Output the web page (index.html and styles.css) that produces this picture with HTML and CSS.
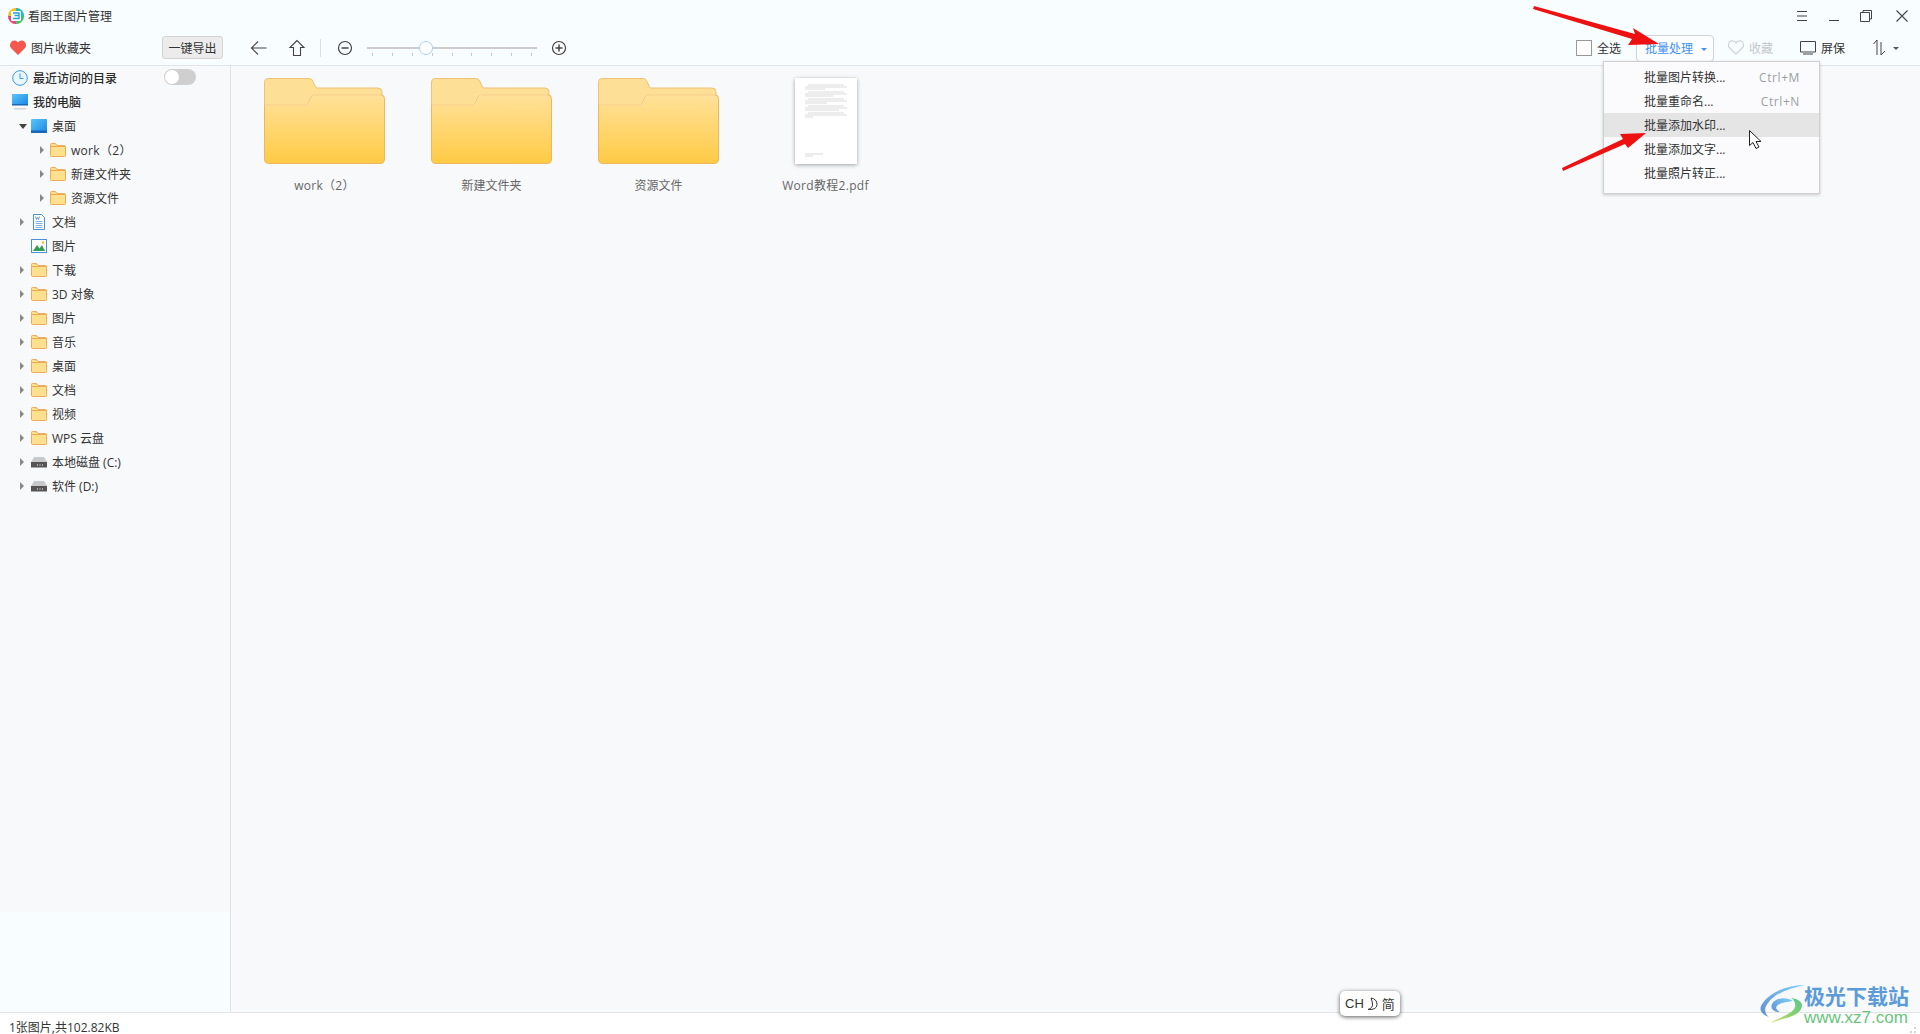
FILE: index.html
```html
<!DOCTYPE html>
<html lang="zh">
<head>
  <meta charset="UTF-8">
  <title>看图王图片管理</title>
  <link rel="stylesheet" href="styles.css">
</head>
<body>
  <svg class="defs" width="0" height="0">
    <defs>
      <linearGradient id="bigFolder" x1="0" y1="0" x2="0" y2="1">
        <stop offset="0" stop-color="#ffe199"/>
        <stop offset="1" stop-color="#ffcb45"/>
      </linearGradient>
      <linearGradient id="screenBlue" x1="0" y1="0" x2="1" y2="1">
        <stop offset="0" stop-color="#5cc5fb"/>
        <stop offset="1" stop-color="#1a86e4"/>
      </linearGradient>
      <linearGradient id="swirlBlue" x1="0" y1="1" x2="1" y2="0">
        <stop offset="0" stop-color="#5f8fd4"/>
        <stop offset="1" stop-color="#7fd0f7"/>
      </linearGradient>
      <linearGradient id="swirlGreen" x1="0" y1="1" x2="1" y2="0">
        <stop offset="0" stop-color="#efe08a"/>
        <stop offset=".45" stop-color="#8ed26a"/>
        <stop offset="1" stop-color="#58c88c"/>
      </linearGradient>
      <symbol id="folder" viewBox="0 0 16 16">
        <path d="M.5 2.500q0-1 1-1h4l1.500 2h7.500q1 0 1 1v9q0 1-1 1h-13q-1 0-1-1z" fill="#ffe08f" stroke="#eeaa55"/>
        <path d="M1 4.500h14" stroke="#eeaa55"/>
      </symbol>
      <symbol id="disk" viewBox="0 0 16 16">
        <path d="M3 3h10l3 5H0z" fill="#c9c9c9"/>
        <path d="M0 8h16v5.500H0z" fill="#555"/>
        <path d="M6 11h1M8.500 11h1M11 11h1" stroke="#fff"/>
      </symbol>
      <symbol id="bigfolder" viewBox="0 0 121 86">
        <path d="M4 .5h41q3 0 4 3l3 6.500h62q4 0 4 4v16H.5V4q0-3.500 3.500-3.500z" fill="#fddf96" stroke="#f0c277"/>
        <path d="M.5 27h41q2 0 3-2l3-6q1-2 3-2H117q3.500 0 3.500 3.500V81q0 4.500-4.500 4.500H5q-4.500 0-4.500-4.500z" fill="url(#bigFolder)" stroke="#efb660"/>
        <path d="M1 27h41q2 0 3-2l3-6q1-2 3-2h66" fill="none" stroke="#ffe9b4" stroke-width=".8"/>
      </symbol>
    </defs>
  </svg>

  <header class="top">
    <div class="titlebar">
      <svg class="app-logo" width="16" height="16" viewBox="0 0 16 16">
        <circle cx="8" cy="8" r="8" fill="#f2c21b"/>
        <path d="M8 0a8 8 0 0 1 8 8H8z" fill="#26b8d8"/>
        <path d="M16 8a8 8 0 0 1-8 8V8z" fill="#3ac66d"/>
        <path d="M8 16a8 8 0 0 1-8-8h8z" fill="#e8428c"/>
        <rect x="3" y="3" width="10" height="10" rx="1" fill="#fff"/>
        <path d="M5 5h6v2.500H6.500M11 7.500v3H5" fill="none" stroke="#1aa6d8" stroke-width="1.300"/>
      </svg>
      <span class="app-name">看图王图片管理</span>
      <div class="win-btns">
        <svg width="16" height="16" viewBox="0 0 16 16"><path d="M3 3.500h10M3 8h10M3 12.500h10" stroke="#444"/></svg>
        <svg width="16" height="16" viewBox="0 0 16 16"><path d="M3 12.500h10" stroke="#444"/></svg>
        <svg width="16" height="16" viewBox="0 0 16 16"><path d="M2.500 4.500h9v9h-9zM5 4.500v-2h8.500v8.500h-2" fill="none" stroke="#444"/></svg>
        <svg width="16" height="16" viewBox="0 0 16 16"><path d="M2.500 2.500l11 11M13.500 2.500l-11 11" stroke="#444" stroke-width="1.100"/></svg>
      </div>
    </div>
    <div class="toolbar">
      <div class="tool-left">
        <svg width="16" height="15" viewBox="0 0 16 15"><path d="M8 15L1.200 8.200Q-1 5.500.8 2.500 2.500 0 5 .5 7 .8 8 2.500 9 .8 11 .5q2.500-.5 4.200 2 1.800 3-.4 5.700z" fill="#f4574c"/></svg>
        <span class="fav-label">图片收藏夹</span>
        <button class="export-btn">一键导出</button>
      </div>
      <div class="tool-nav">
        <svg class="nav-back" width="18" height="18" viewBox="0 0 18 18"><path d="M8 2.500L1.500 9 8 15.500M1.500 9h15" fill="none" stroke="#444" stroke-width="1.100"/></svg>
        <svg class="nav-up" width="18" height="18" viewBox="0 0 18 18"><path d="M9 1.500L2 8.500h3.500v8h7v-8H16z" fill="none" stroke="#444" stroke-width="1.100"/></svg>
        <span class="nav-sep"></span>
        <svg class="zoom-out" width="16" height="16" viewBox="0 0 16 16"><circle cx="8" cy="8" r="6.500" fill="none" stroke="#444" stroke-width="1.200"/><path d="M4.500 8h7" stroke="#444" stroke-width="1.500"/></svg>
        <div class="slider">
          <div class="track"></div>
          <div class="ticks"><i></i><i></i><i></i><i></i><i></i><i></i><i></i><i></i><i></i></div>
          <div class="thumb"></div>
        </div>
        <svg class="zoom-in" width="16" height="16" viewBox="0 0 16 16"><circle cx="8" cy="8" r="6.500" fill="none" stroke="#444" stroke-width="1.200"/><path d="M4.500 8h7M8 4.500v7" stroke="#444" stroke-width="1.500"/></svg>
      </div>
      <div class="tool-right">
        <span class="checkbox"></span>
        <span class="tr-label">全选</span>
        <button class="batch-btn">批量处理<i class="caret blue"></i></button>
        <svg class="fav-heart" width="16" height="15" viewBox="0 0 16 15"><path d="M8 14L1.500 7.800Q-.5 5 1.200 2.500 3 .2 5.500 1 7.200 1.500 8 3 8.800 1.500 10.500 1 13 .2 14.800 2.500 16.500 5 14.500 7.800z" fill="none" stroke="#cfd3d6" stroke-width="1.200"/></svg>
        <span class="tr-label muted">收藏</span>
        <svg class="screen-icon" width="16" height="15" viewBox="0 0 16 15"><path d="M.5 1.500h15v10.500H.5z" fill="none" stroke="#444"/><path d="M3 14h10" stroke="#444"/></svg>
        <span class="tr-label">屏保</span>
        <svg class="sort-icon" width="13" height="15" viewBox="0 0 13 15"><path d="M4 0v15M4 0L.5 4M8 15V2M8 15l4-4" fill="none" stroke="#444"/></svg>
        <i class="caret"></i>
      </div>
    </div>
  </header>

  <div class="body-row">
    <aside class="sidebar">
      <div class="tree">
        <div class="row root">
          <svg width="16" height="16" viewBox="0 0 16 16"><circle cx="8" cy="8" r="7.300" fill="#eaf6fe" stroke="#3a9ae0"/><path d="M8 3.500V8.500h3.500" fill="none" stroke="#3a9ae0"/></svg>
          <span>最近访问的目录</span>
          <span class="toggle"><i></i></span>
        </div>
        <div class="row root">
          <svg width="16" height="16" viewBox="0 0 16 16"><rect y="0" width="16" height="11" fill="url(#screenBlue)"/><path d="M0 10h16v1.500H0z" fill="#1569b8"/><path d="M2 14h12v1.500H2z" fill="#d4d4d4"/></svg>
          <span>我的电脑</span>
        </div>
        <div class="row lv1">
          <i class="arrow open"></i>
          <svg width="16" height="14" viewBox="0 0 16 14"><rect width="16" height="14" rx="1" fill="url(#screenBlue)"/><path d="M0 11.500h16V14H0z" fill="#1569b8"/></svg>
          <span>桌面</span>
        </div>
        <div class="row lv2"><i class="arrow"></i><svg width="16" height="16"><use href="#folder"/></svg><span class="wide">work（2）</span></div>
        <div class="row lv2"><i class="arrow"></i><svg width="16" height="16"><use href="#folder"/></svg><span>新建文件夹</span></div>
        <div class="row lv2"><i class="arrow"></i><svg width="16" height="16"><use href="#folder"/></svg><span>资源文件</span></div>
        <div class="row lv1">
          <i class="arrow"></i>
          <svg width="16" height="16" viewBox="0 0 16 16"><path d="M2.500.5h8l3 3v12h-11z" fill="#fff" stroke="#4a90d8"/><path d="M4.500 7.500h7M4.500 9.500h7M4.500 11.500h7M4.500 13.500h7" stroke="#7fb2e5"/><path d="M4.500 2.500l1 3 1-2 1 2 1-3" fill="none" stroke="#3a7cc8" stroke-width=".8"/></svg>
          <span>文档</span>
        </div>
        <div class="row lv1">
          <i class="arrow none"></i>
          <svg width="16" height="16" viewBox="0 0 16 16"><rect x=".5" y="1.500" width="15" height="13" fill="#fff" stroke="#4a90d8"/><path d="M2 13l4-6 2.500 3.500L11 7l3 6z" fill="#2f9e55"/><circle cx="12" cy="4.500" r="1.300" fill="#f2c21b"/></svg>
          <span>图片</span>
        </div>
        <div class="row lv1"><i class="arrow"></i><svg width="16" height="16"><use href="#folder"/></svg><span>下载</span></div>
        <div class="row lv1"><i class="arrow"></i><svg width="16" height="16"><use href="#folder"/></svg><span>3D 对象</span></div>
        <div class="row lv1"><i class="arrow"></i><svg width="16" height="16"><use href="#folder"/></svg><span>图片</span></div>
        <div class="row lv1"><i class="arrow"></i><svg width="16" height="16"><use href="#folder"/></svg><span>音乐</span></div>
        <div class="row lv1"><i class="arrow"></i><svg width="16" height="16"><use href="#folder"/></svg><span>桌面</span></div>
        <div class="row lv1"><i class="arrow"></i><svg width="16" height="16"><use href="#folder"/></svg><span>文档</span></div>
        <div class="row lv1"><i class="arrow"></i><svg width="16" height="16"><use href="#folder"/></svg><span>视频</span></div>
        <div class="row lv1"><i class="arrow"></i><svg width="16" height="16"><use href="#folder"/></svg><span>WPS 云盘</span></div>
        <div class="row lv1"><i class="arrow"></i><svg width="16" height="16"><use href="#disk"/></svg><span>本地磁盘 (C:)</span></div>
        <div class="row lv1"><i class="arrow"></i><svg width="16" height="16"><use href="#disk"/></svg><span>软件 (D:)</span></div>
      </div>
      <div class="side-foot"></div>
    </aside>

    <main class="files">
      <div class="file">
        <svg class="file-folder" width="121" height="86"><use href="#bigfolder"/></svg>
        <span class="file-name wide">work（2）</span>
      </div>
      <div class="file">
        <svg class="file-folder" width="121" height="86"><use href="#bigfolder"/></svg>
        <span class="file-name">新建文件夹</span>
      </div>
      <div class="file">
        <svg class="file-folder" width="121" height="86"><use href="#bigfolder"/></svg>
        <span class="file-name">资源文件</span>
      </div>
      <div class="file">
        <div class="pdf-page">
          <svg width="62" height="86" viewBox="0 0 62 86">
            <g class="pdf-lines" stroke="#8d8d8d" stroke-width=".6">
              <path d="M13 7h36M10 9h42M10 11h20M13 14h36M10 16h42M10 18h28M13 21h36M10 23h42M10 25h22M13 28h36M10 30h42M10 32h34M13 35h36M10 37h42M10 39h8M10 76h18M10 78h8"/>
            </g>
          </svg>
        </div>
        <span class="file-name wide">Word教程2.pdf</span>
      </div>
    </main>
  </div>

  <footer class="status">1张图片,共102.82KB</footer>

  <!-- batch dropdown -->
  <div class="menu">
    <div class="menu-item"><span>批量图片转换...</span><span class="key">Ctrl+M</span></div>
    <div class="menu-item"><span>批量重命名...</span><span class="key">Ctrl+N</span></div>
    <div class="menu-item hover"><span>批量添加水印...</span></div>
    <div class="menu-item"><span>批量添加文字...</span></div>
    <div class="menu-item"><span>批量照片转正...</span></div>
  </div>

  <div class="ime">CH<svg width="12" height="14" viewBox="0 0 12 14"><path d="M4 1q6 1 6 6.500T1 12.500Q6 11 5.500 7 5.200 4 4 1z" fill="none" stroke="#333"/></svg>简</div>

  <div class="watermark">
    <svg class="wm-swirl" width="45" height="39" viewBox="0 0 45 39">
      <path d="M45 1C28 1 8 8 1 22-1 27 3 31 9 33 4 29 4 24 8 19 15 9 30 4 45 1z" fill="url(#swirlBlue)"/>
      <path d="M33 17C26 12 15 14 12 20 10 25 14 28 20 28 16 26 15 23 18 21 22 18 28 18 33 17z" fill="url(#swirlBlue)"/>
      <path d="M31 14C40 15 44 20 41 25 37 33 24 34 10 39 20 33 33 30 35 23 36 19 34 16 31 14z" fill="url(#swirlGreen)"/>
    </svg>
    <div class="wm-text">
      <span class="wm-cn">极光下载站</span>
      <span class="wm-url">www.xz7.com</span>
    </div>
  </div>

  <!-- red annotation arrows, the mouse pointer, the resize grip -->
  <svg class="overlay" width="1920" height="1034" viewBox="0 0 1920 1034">
    <g fill="#ee1111">
      <path d="M1534 6L1635 34 1633 28 1659 44 1628 45 1632 39 1533 9z"/>
      <path d="M1562 168L1623 139 1620 134 1646 133 1628 148 1625 144 1563 171z"/>
    </g>
    <path d="M1749.500 130.500v15l3.500-3 3 6 3-1.500-3-5.500h5z" fill="#fff" stroke="#222"/>
    <path d="M1914 1027h2v2h-2zM1910 1031h2v2h-2zM1914 1031h2v2h-2z" fill="#d4d4d4"/>
  </svg>
</body>
</html>
```

FILE: styles.css
```css
* {
  box-sizing: border-box;
}
html, body {
  margin: 0;
  height: 100%;
}
body {
  position: relative;
  display: flex;
  flex-direction: column;
  height: 1034px;
  overflow: hidden;
  font-family: "Open Sans", "Noto Sans CJK SC", sans-serif;
  font-size: 12px;
  color: #333;
  background-color: #f8f9fb;
}
.defs {
  position: absolute;
}
svg {
  display: block;
  flex: none;
}
.wide {
  letter-spacing: 0.3px;
}

/* top area */
.top {
  background-color: #f8fdff;
  border-bottom: 1px solid #e1e4e8;
}
.titlebar {
  display: flex;
  align-items: center;
  height: 32px;
  padding-left: 8px;
  padding-right: 10px;
}
.app-name {
  margin-left: 4px;
}
.win-btns {
  display: flex;
  gap: 16px;
  margin-left: auto;
}
.win-btns svg:last-child {
  margin-left: 4px;
}
.toolbar {
  display: flex;
  align-items: center;
  height: 33px;
  padding-bottom: 2px;
}
.tool-left {
  display: flex;
  align-items: center;
  width: 231px;
  padding-left: 10px;
  padding-right: 8px;
}
.fav-label {
  margin-left: 5px;
}
.export-btn {
  width: 61px;
  height: 23px;
  margin-left: auto;
  padding: 0;
  font: inherit;
  color: #333;
  background-color: #ececec;
  border: 1px solid #d4d4d4;
  border-radius: 3px;
}
.tool-nav {
  display: flex;
  align-items: center;
}
.nav-back {
  margin-left: 19px;
}
.nav-up {
  margin-left: 20px;
}
.nav-sep {
  width: 1px;
  height: 18px;
  margin-left: 14px;
  background-color: #dcdfe2;
}
.zoom-out {
  margin-left: 16px;
}
.slider {
  position: relative;
  width: 170px;
  height: 20px;
  margin-left: 14px;
}
.track {
  position: absolute;
  left: 0;
  right: 0;
  top: 9px;
  height: 2px;
  background-color: #ccc;
}
.ticks {
  display: flex;
  justify-content: space-between;
  position: absolute;
  left: 5px;
  right: 5px;
  top: 15px;
}
.ticks i {
  width: 1px;
  height: 3px;
  background-color: #c8c8c8;
}
.thumb {
  position: absolute;
  left: 52px;
  top: 3px;
  width: 14px;
  height: 14px;
  background-color: #fff;
  border: 1px solid #a6cff4;
  border-radius: 50%;
}
.zoom-in {
  margin-left: 14px;
}
.tool-right {
  display: flex;
  align-items: center;
  margin-left: auto;
  padding-right: 21px;
}
.checkbox {
  width: 16px;
  height: 16px;
  background-color: #fff;
  border: 1px solid #999;
}
.tr-label {
  margin-left: 5px;
}
.tr-label.muted {
  color: #c4c8cb;
}
.batch-btn {
  display: flex;
  align-items: center;
  width: 78px;
  height: 27px;
  margin-left: 15px;
  margin-top: 1px;
  padding: 0 0 0 8px;
  font: inherit;
  color: #3f8fef;
  background-color: #fbfdff;
  border: 1px solid #cfd3d6;
  border-radius: 4px;
}
.fav-heart {
  margin-left: 14px;
}
.screen-icon {
  margin-left: 27px;
}
.sort-icon {
  margin-left: 28px;
}
.caret {
  width: 0;
  height: 0;
  margin-left: 7px;
  margin-top: 2px;
  border-left: 3px solid transparent;
  border-right: 3px solid transparent;
  border-top: 3px solid #555;
}
.caret.blue {
  margin-left: 8px;
  border-top-color: #3f8fef;
}

/* left tree */
.body-row {
  display: flex;
  flex: 1;
  min-height: 0;
}
.sidebar {
  display: flex;
  flex-direction: column;
  width: 231px;
  background-color: #f8f9fb;
  border-right: 1px solid #dfe3e7;
}
.tree {
  height: 846px;
}
.side-foot {
  flex: 1;
  background-color: #f8fdff;
}
.row {
  display: flex;
  align-items: center;
  height: 24px;
}
.row.root {
  padding-left: 12px;
  font-weight: 500;
  color: #2b2b2b;
}
.row.root span {
  margin-left: 5px;
}
.row.root .toggle {
  margin-left: 47px;
}
.row.lv1 {
  padding-left: 20px;
}
.row.lv2 {
  padding-left: 40px;
}
.row > svg + span {
  margin-left: 5px;
}
.arrow {
  width: 0;
  height: 0;
  margin-right: 7px;
  border-top: 4px solid transparent;
  border-bottom: 4px solid transparent;
  border-left: 4px solid #888;
}
.lv2 .arrow {
  margin-right: 6px;
}
.arrow.open {
  margin-left: -1px;
  margin-right: 4px;
  border-left: 4px solid transparent;
  border-right: 4px solid transparent;
  border-bottom: none;
  border-top: 5px solid #444;
}
.arrow.none {
  visibility: hidden;
}
.toggle {
  display: block;
  position: relative;
  width: 32px;
  height: 16px;
  margin-top: -3px;
  background-color: #cfcfcf;
  border-radius: 8px;
}
.toggle i {
  position: absolute;
  left: 1px;
  top: 1px;
  width: 14px;
  height: 14px;
  background-color: #fff;
  border-radius: 50%;
}

/* file grid */
.files {
  display: flex;
  align-items: flex-start;
  flex: 1;
  padding-top: 12px;
  padding-left: 10px;
}
.file {
  display: flex;
  flex-direction: column;
  align-items: center;
  width: 167px;
}
.file-name {
  margin-top: 13px;
  line-height: 18px;
  color: #666;
}
.pdf-page {
  width: 62px;
  height: 86px;
  background-color: #fff;
  box-shadow: 0 1px 4px rgba(0, 0, 0, 0.35);
}
.pdf-lines {
  opacity: 0.5;
}

/* bottom */
.status {
  display: flex;
  align-items: center;
  height: 22px;
  padding-top: 6px;
  padding-left: 9px;
  background-color: #fff;
  border-top: 1px solid #e1e3e6;
}

/* things lying over the page */
.menu {
  position: absolute;
  left: 1603px;
  top: 61px;
  width: 217px;
  height: 133px;
  padding-top: 3px;
  background-color: #fbfbfd;
  border: 1px solid #d0d0d0;
  box-shadow: 0 1px 3px rgba(0, 0, 0, 0.2);
}
.menu-item {
  display: flex;
  align-items: center;
  justify-content: space-between;
  height: 24px;
  padding-left: 40px;
  padding-right: 19px;
}
.menu-item.hover {
  background-color: #e5e5e5;
}
.key {
  letter-spacing: 0.6px;
  color: #9a9fa5;
}
.ime {
  display: flex;
  align-items: center;
  gap: 3px;
  position: absolute;
  left: 1340px;
  top: 991px;
  height: 25px;
  padding: 0 5px;
  font-family: "Liberation Sans", "Noto Sans CJK SC", sans-serif;
  font-size: 13px;
  background-color: #fff;
  border-radius: 5px;
  box-shadow: 0 1px 4px rgba(0, 0, 0, 0.65);
}
.watermark {
  display: flex;
  position: absolute;
  left: 1760px;
  top: 984px;
}
.wm-text {
  display: flex;
  flex-direction: column;
  margin-left: -1px;
}
.wm-cn {
  font-size: 21px;
  font-weight: 700;
  line-height: 24px;
  color: #5b9bd9;
}
.wm-url {
  font-family: "Liberation Sans", sans-serif;
  font-size: 17px;
  line-height: 19px;
  color: #68c47c;
}
.overlay {
  position: absolute;
  left: 0;
  top: 0;
  pointer-events: none;
}
```
